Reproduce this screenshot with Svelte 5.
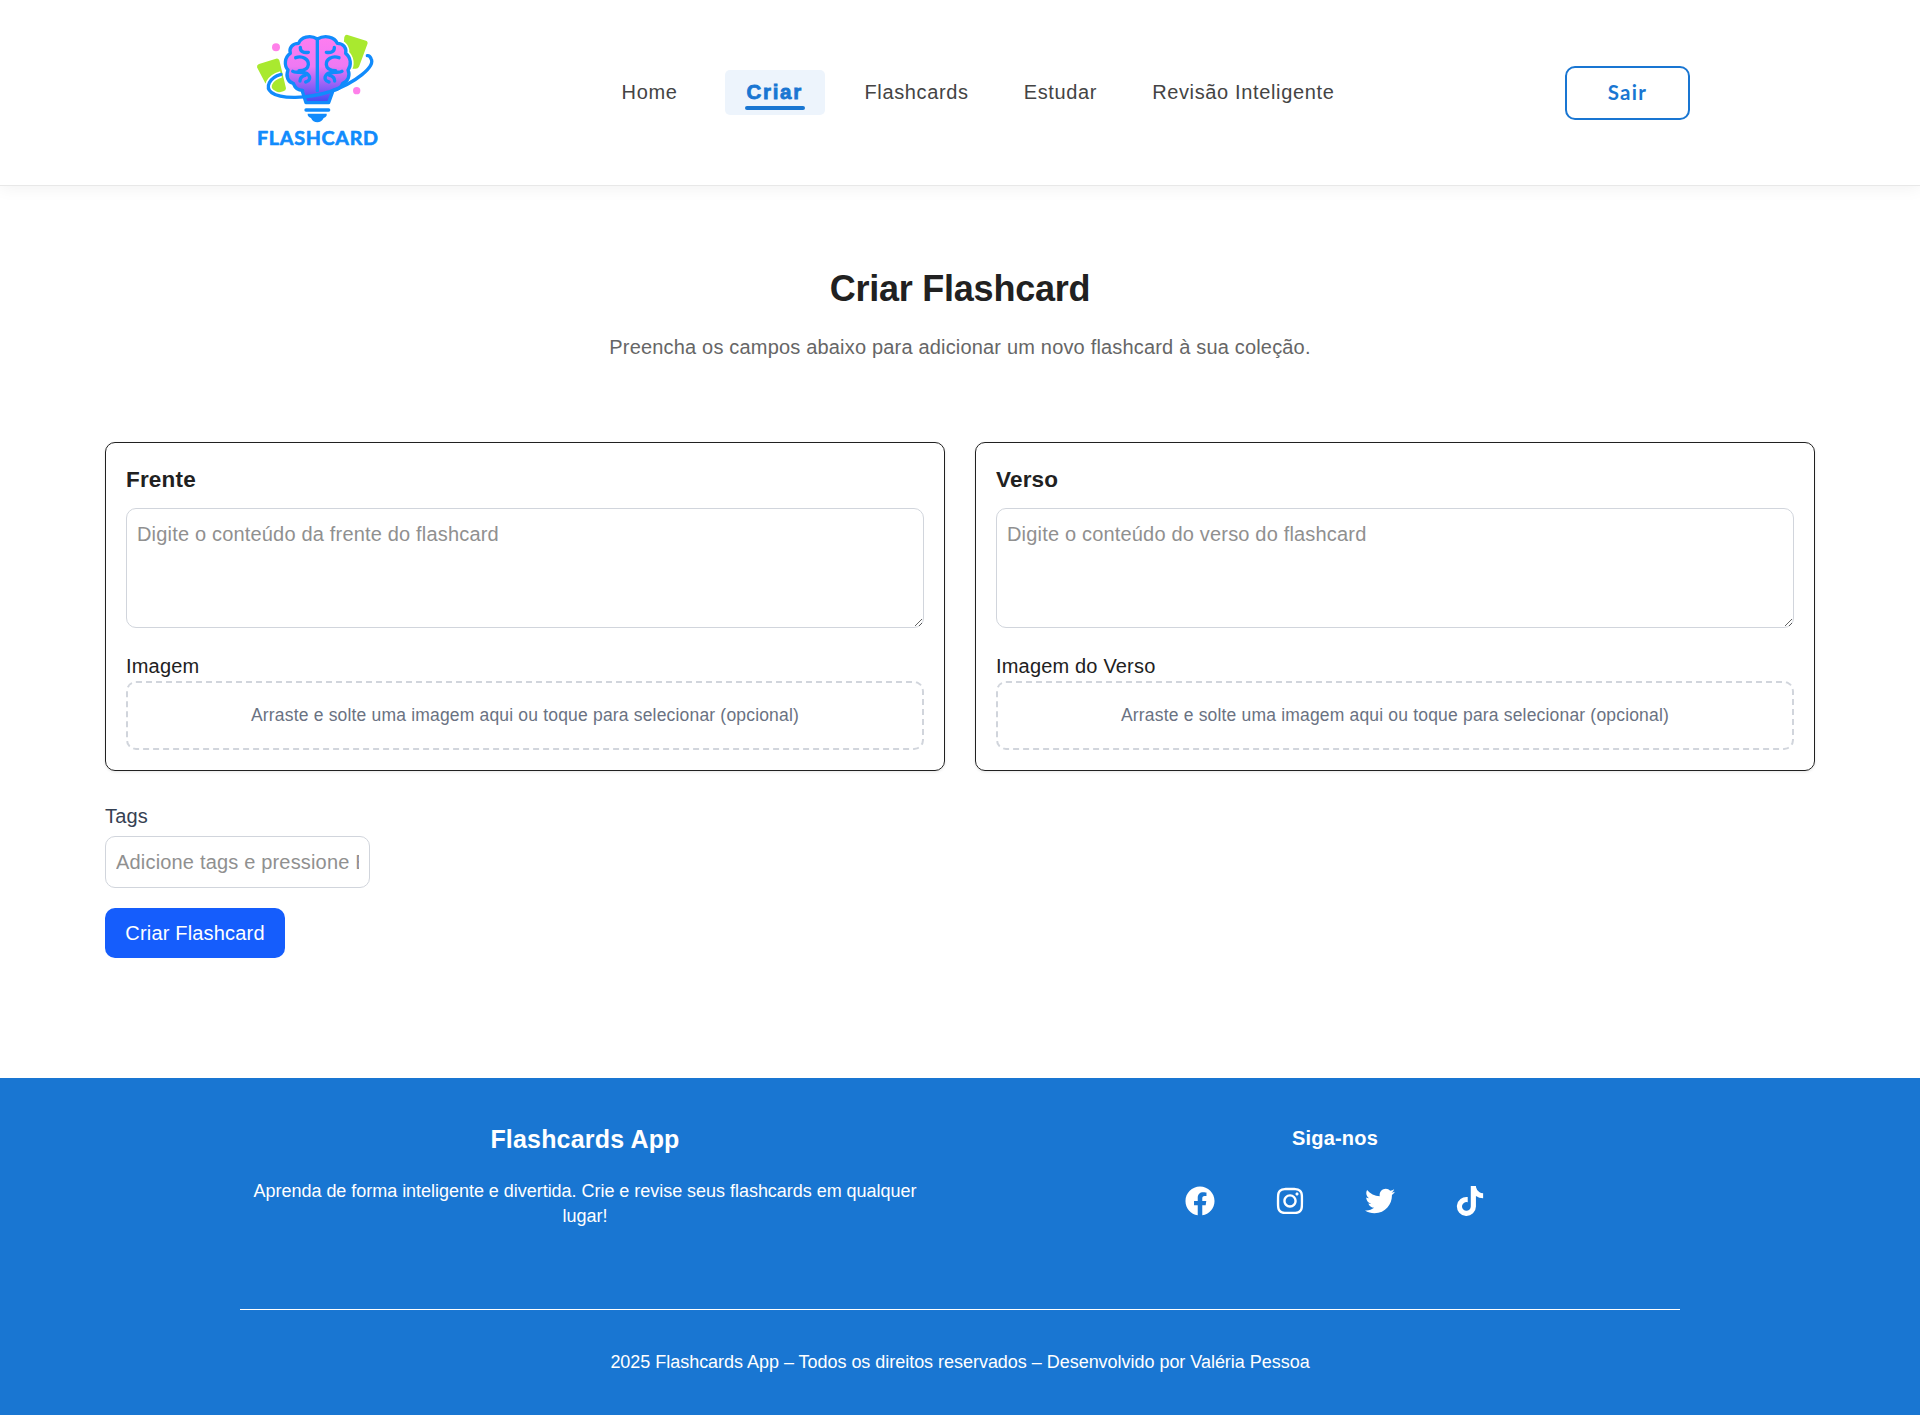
<script>
  const links = ['Home', 'Criar', 'Flashcards', 'Estudar', 'Revisão Inteligente'];
  const active = 'Criar';

  const sides = [
    { title: 'Frente', placeholder: 'Digite o conteúdo da frente do flashcard', image: 'Imagem' },
    { title: 'Verso', placeholder: 'Digite o conteúdo do verso do flashcard', image: 'Imagem do Verso' }
  ];

  const socials = [
    {
      name: 'Facebook',
      box: '0 0 512 512',
      d: 'M504 256C504 119 393 8 256 8S8 119 8 256c0 123.78 90.69 226.38 209.25 245V327.69h-63V256h63v-54.64c0-62.15 37-96.48 93.67-96.48 27.14 0 55.52 4.84 55.52 4.84v61h-31.28c-30.8 0-40.41 19.12-40.41 38.73V256h68.78l-11 71.69h-57.78V501C413.31 482.38 504 379.78 504 256z'
    },
    {
      name: 'Instagram',
      box: '0 0 448 512',
      d: 'M224.1 141c-63.6 0-114.9 51.3-114.9 114.9s51.3 114.9 114.9 114.9S339 319.5 339 255.9 287.7 141 224.1 141zm0 189.6c-41.1 0-74.7-33.5-74.7-74.7s33.5-74.7 74.7-74.7 74.7 33.5 74.7 74.7-33.6 74.7-74.7 74.7zm146.4-194.3c0 14.9-12 26.8-26.8 26.8-14.9 0-26.8-12-26.8-26.8s12-26.8 26.8-26.8 26.8 12 26.8 26.8zm76.1 27.2c-1.7-35.9-9.9-67.7-36.2-93.9-26.2-26.2-58-34.4-93.9-36.2-37-2.1-147.9-2.1-184.9 0-35.8 1.7-67.6 9.9-93.9 36.1s-34.4 58-36.2 93.9c-2.1 37-2.1 147.9 0 184.9 1.7 35.9 9.9 67.7 36.2 93.9s58 34.4 93.9 36.2c37 2.1 147.9 2.1 184.9 0 35.9-1.7 67.7-9.9 93.9-36.2 26.2-26.2 34.4-58 36.2-93.9 2.1-37 2.1-147.8 0-184.8zM398.8 388c-7.8 19.6-22.9 34.7-42.6 42.6-29.5 11.7-99.5 9-132.1 9s-102.7 2.6-132.1-9c-19.6-7.8-34.7-22.9-42.6-42.6-11.7-29.5-9-99.5-9-132.1s-2.6-102.7 9-132.1c7.8-19.6 22.9-34.7 42.6-42.6 29.5-11.7 99.5-9 132.1-9s102.7-2.6 132.1 9c19.6 7.8 34.7 22.9 42.6 42.6 11.7 29.5 9 99.5 9 132.1s2.7 102.7-9 132.1z'
    },
    {
      name: 'Twitter',
      box: '0 0 512 512',
      d: 'M459.37 151.716c.325 4.548.325 9.097.325 13.645 0 138.72-105.583 298.558-298.558 298.558-59.452 0-114.68-17.219-161.137-47.106 8.447.974 16.568 1.299 25.34 1.299 49.055 0 94.213-16.568 130.274-44.832-46.132-.975-84.792-31.188-98.112-72.772 6.498.974 12.995 1.624 19.818 1.624 9.421 0 18.843-1.3 27.614-3.573-48.081-9.747-84.143-51.98-84.143-102.985v-1.299c13.969 7.797 30.214 12.67 47.431 13.319-28.264-18.843-46.781-51.005-46.781-87.391 0-19.492 5.197-37.36 14.294-52.954 51.655 63.675 129.3 105.258 216.365 109.807-1.624-7.797-2.599-15.918-2.599-24.04 0-57.828 46.782-104.934 104.934-104.934 30.213 0 57.502 12.67 76.67 33.137 23.715-4.548 46.456-13.32 66.599-25.34-7.798 24.366-24.366 44.833-46.132 57.827 21.117-2.273 41.584-8.122 60.426-16.243-14.292 20.791-32.161 39.308-52.628 54.253z'
    },
    {
      name: 'TikTok',
      box: '0 0 448 512',
      d: 'M448,209.91a210.06,210.06,0,0,1-122.77-39.25V349.38A162.55,162.55,0,1,1,185,188.31V278.2a74.62,74.62,0,1,0,52.23,71.18V0l88,0a121.18,121.18,0,0,0,1.86,22.17h0A122.18,122.18,0,0,0,381,102.39a121.43,121.43,0,0,0,67,20.14Z'
    }
  ];
</script>

<header class="header">
  <div class="bar">
    <svg class="logo" viewBox="0 0 450 420" role="img" aria-label="Flashcard">
      <defs>
        <linearGradient id="brain" x1="0" y1="0" x2="0" y2="1">
          <stop offset="0" stop-color="#ff7df0" />
          <stop offset="0.45" stop-color="#ee79f3" />
          <stop offset="0.75" stop-color="#8f5ff6" />
          <stop offset="1" stop-color="#3a4af5" />
        </linearGradient>
      </defs>
      <!-- cards -->
      <path d="M57 132 L108 116 Q115 114 118 121 L138 205 Q138 212 130 214 L112 219 Q102 219 97 210 L85 196 L76 190 L51 142 Q50 134 57 132Z" fill="#a9e92f" />
      <path d="M323 45 L378 62 Q385 65 382 73 L357 140 Q354 146 347 146 L325 146 L310 80 L313 51 Q316 43 323 45Z" fill="#a9e92f" />
      <circle cx="108" cy="82" r="12" fill="#ff80ea" />
      <circle cx="350" cy="212" r="11" fill="#ff80ea" />
      <!-- white gap around the brain and the orbit -->
      <path d="M232 57 C210 43 182 52 176 70 C157 70 146 84 151 100 C133 112 132 137 144 150 C136 174 150 189 160 190 C165 204 176 211 188 213 L280 210 C292 210 304 202 308 190 C326 184 331 164 324 150 C335 136 333 112 317 100 C321 84 310 70 292 70 C284 50 254 44 232 57Z" fill="none" stroke="#fff" stroke-width="20" />
      <path d="M123 163 C88 173 74 202 95 218 C122 238 185 235 232 222" fill="none" stroke="#fff" stroke-width="20" />
      <path d="M232 57 C210 43 182 52 176 70 C157 70 146 84 151 100 C133 112 132 137 144 150 C136 174 150 189 160 190 C165 204 176 211 188 213 L197 249 L267 249 L280 210 C292 210 304 202 308 190 C326 184 331 164 324 150 C335 136 333 112 317 100 C321 84 310 70 292 70 C284 50 254 44 232 57Z" fill="url(#brain)" />
      <g fill="none" stroke="#118bfc" stroke-width="10" stroke-linecap="round" stroke-linejoin="round">
        <path d="M188 211 C176 211 165 204 160 190 C145 187 136 170 144 150 C132 137 133 112 151 100 C146 84 157 70 176 70 C182 52 210 43 232 57 C254 44 284 50 292 70 C310 70 321 84 317 100 C333 112 335 136 324 150 C331 166 325 184 308 190 C304 202 292 210 280 211" />
        <path d="M232 60 V212" />
        <path d="M187 214 L198 248 H266 L279 212" />
        <path d="M181 82 C180 96 192 99 205 97 M167 113 C188 106 206 118 205 134 C204 148 190 152 177 152 M158 154 C166 161 193 151 204 163 C214 174 207 184 197 186 M180 183 C180 173 186 168 196 166" />
        <path d="M283 82 C284 96 272 99 259 97 M297 113 C276 106 258 118 259 134 C260 148 274 152 287 152 M306 154 C298 161 271 151 260 163 C250 174 257 184 267 186 M284 183 C284 173 278 168 268 166" />
      </g>
      <path d="M123 163 C88 173 74 202 95 218 C122 238 200 237 270 215 C348 188 407 139 393 116 Q389 106 382 107" fill="none" stroke="#118bfc" stroke-width="10" stroke-linecap="round" />
      <path d="M198 270 H266" stroke="#118bfc" stroke-width="10" stroke-linecap="round" />
      <path d="M203 281 H260 Q262 290 251 294 Q244 307 232 307 Q219 307 213 294 Q202 290 203 281Z" fill="#118bfc" />
      <text class="wordmark" x="51" y="376" textLength="363">FLASHCARD</text>
    </svg>
    <nav class="nav">
      {#each links as link}
        <a class="link" class:active={link === active} href="#top">{link}</a>
      {/each}
    </nav>
    <button class="logout">Sair</button>
  </div>
</header>

<main class="main">
  <h1>Criar Flashcard</h1>
  <p class="lead">Preencha os campos abaixo para adicionar um novo flashcard à sua coleção.</p>

  <div class="sides">
    {#each sides as side}
      <section class="card">
        <h2>{side.title}</h2>
        <textarea placeholder={side.placeholder}></textarea>
        <div class="label">{side.image}</div>
        <div class="drop">Arraste e solte uma imagem aqui ou toque para selecionar (opcional)</div>
      </section>
    {/each}
  </div>

  <label class="tags" for="tags">Tags</label>
  <input id="tags" placeholder="Adicione tags e pressione Enter" />
  <button class="submit">Criar Flashcard</button>
</main>

<footer class="footer">
  <div class="columns">
    <div class="column">
      <h3>Flashcards App</h3>
      <p>Aprenda de forma inteligente e divertida. Crie e revise seus flashcards em qualquer lugar!</p>
    </div>
    <div class="column">
      <h4>Siga-nos</h4>
      <div class="socials">
        {#each socials as icon}
          <a href="#top" aria-label={icon.name}>
            <svg viewBox={icon.box} width="30" height="30" fill="currentColor"><path d={icon.d} /></svg>
          </a>
        {/each}
      </div>
    </div>
  </div>
  <p class="copy">2025 Flashcards App – Todos os direitos reservados – Desenvolvido por Valéria Pessoa</p>
</footer>

<style>
  :global(body) {
    margin: 0;
    background: #fff;
    color: #212121;
    font: 20px/30px 'Liberation Sans', Arial, sans-serif;
    letter-spacing: 0.18px;
  }
  :global(*) {
    box-sizing: border-box;
  }
  h1, h2, h3, h4, p {
    margin: 0;
  }
  a {
    color: inherit;
    text-decoration: none;
  }
  button, input, textarea {
    font: inherit;
    letter-spacing: inherit;
  }
  .header {
    height: 186px;
    border-bottom: 1px solid #e8e8e8;
    box-shadow: 0 2px 16px rgba(0, 0, 0, 0.06);
  }
  .bar {
    width: 1450px;
    height: 185px;
    margin-left: 240px;
    display: flex;
    justify-content: space-between;
    align-items: center;
  }
  .logo {
    width: 150px;
    height: 140px;
    margin-top: -5px;
  }
  .wordmark {
    font: 700 59px Lato, sans-serif;
    fill: #118bfc;
    stroke: #118bfc;
    stroke-width: 2;
    stroke-linejoin: round;
  }
  .nav {
    display: flex;
    gap: 15px;
    margin-left: 1px;
  }
  .link {
    height: 45px;
    padding: 7px 20px 0;
    color: #444;
    letter-spacing: 0.64px;
    border-radius: 5px;
  }
  .active {
    position: relative;
    margin: 0 5px 0 12px;
    width: 100px;
    padding-left: 22px;
    background: #edf4fc;
    color: #1976d2;
    font-size: 20.5px;
    font-weight: 700;
    letter-spacing: 1.7px;
    -webkit-text-stroke: 0.8px #1976d2;
  }
  .active::after {
    content: '';
    position: absolute;
    left: 20px;
    right: 20px;
    bottom: 5px;
    height: 4px;
    border-radius: 2px;
    background: #1976d2;
  }
  .logout {
    width: 125px;
    height: 54px;
    padding: 0 0 2px;
    border: 2px solid #1976d2;
    border-radius: 10px;
    background: #fff;
    color: #1976d2;
    font: 700 20.5px/30px Lato, sans-serif;
    letter-spacing: 1.3px;
  }
  .main {
    height: 892px;
    padding: 83px 105px 0;
  }
  h1 {
    font-size: 36px;
    line-height: 40px;
    letter-spacing: -0.25px;
    text-align: center;
  }
  .lead {
    margin-top: 23px;
    color: #666;
    text-align: center;
  }
  .sides {
    display: grid;
    grid-template-columns: 1fr 1fr;
    gap: 30px;
    margin-top: 80px;
  }
  .card {
    height: 329px;
    padding: 20px;
    border: 1px solid #212121;
    border-radius: 10px;
    box-shadow: 0 1px 3px rgba(0, 0, 0, 0.1);
  }
  h2 {
    font-size: 22.5px;
    line-height: 34px;
  }
  textarea {
    display: block;
    width: 100%;
    height: 120px;
    margin-top: 11px;
    padding: 10px;
    border: 1px solid #d1d5dc;
    border-radius: 10px;
    resize: vertical;
    background: #fff;
  }
  textarea::placeholder, input::placeholder {
    color: #909090;
    opacity: 1;
  }
  .label {
    margin-top: 23px;
  }
  .drop {
    height: 69px;
    padding: 20px;
    border: 2px dashed #d1d5dc;
    border-radius: 10px;
    color: #6a7282;
    font-size: 17.5px;
    line-height: 25px;
    text-align: center;
  }
  .tags {
    display: block;
    margin-top: 30px;
    color: #364153;
  }
  input {
    display: block;
    width: 265px;
    height: 52px;
    margin-top: 5px;
    padding: 10px;
    border: 1px solid #d1d5dc;
    border-radius: 10px;
    background: #fff;
  }
  .submit {
    display: block;
    width: 180px;
    height: 50px;
    margin-top: 20px;
    padding: 0;
    border: 0;
    border-radius: 10px;
    background: #155dfc;
    color: #fff;
  }
  .footer {
    height: 337px;
    padding: 0 240px;
    background: #1976d2;
    color: #fff;
    text-align: center;
  }
  .columns {
    display: grid;
    grid-template-columns: 1fr 1fr;
    gap: 60px;
    height: 231px;
    padding-top: 42px;
  }
  h3 {
    font-size: 25px;
    line-height: 38px;
  }
  .column p {
    margin-top: 21px;
    font-size: 18px;
    line-height: 25px;
    letter-spacing: -0.03px;
  }
  h4 {
    margin-top: 3px;
    font-size: 20px;
    line-height: 30px;
  }
  .socials {
    display: flex;
    justify-content: center;
    gap: 60px;
    margin-top: 33px;
  }
  .socials svg {
    display: block;
  }
  .copy {
    padding-top: 37px;
    border-top: 1px solid #fff;
    font-size: 18px;
    line-height: 30px;
    letter-spacing: -0.03px;
  }
</style>
